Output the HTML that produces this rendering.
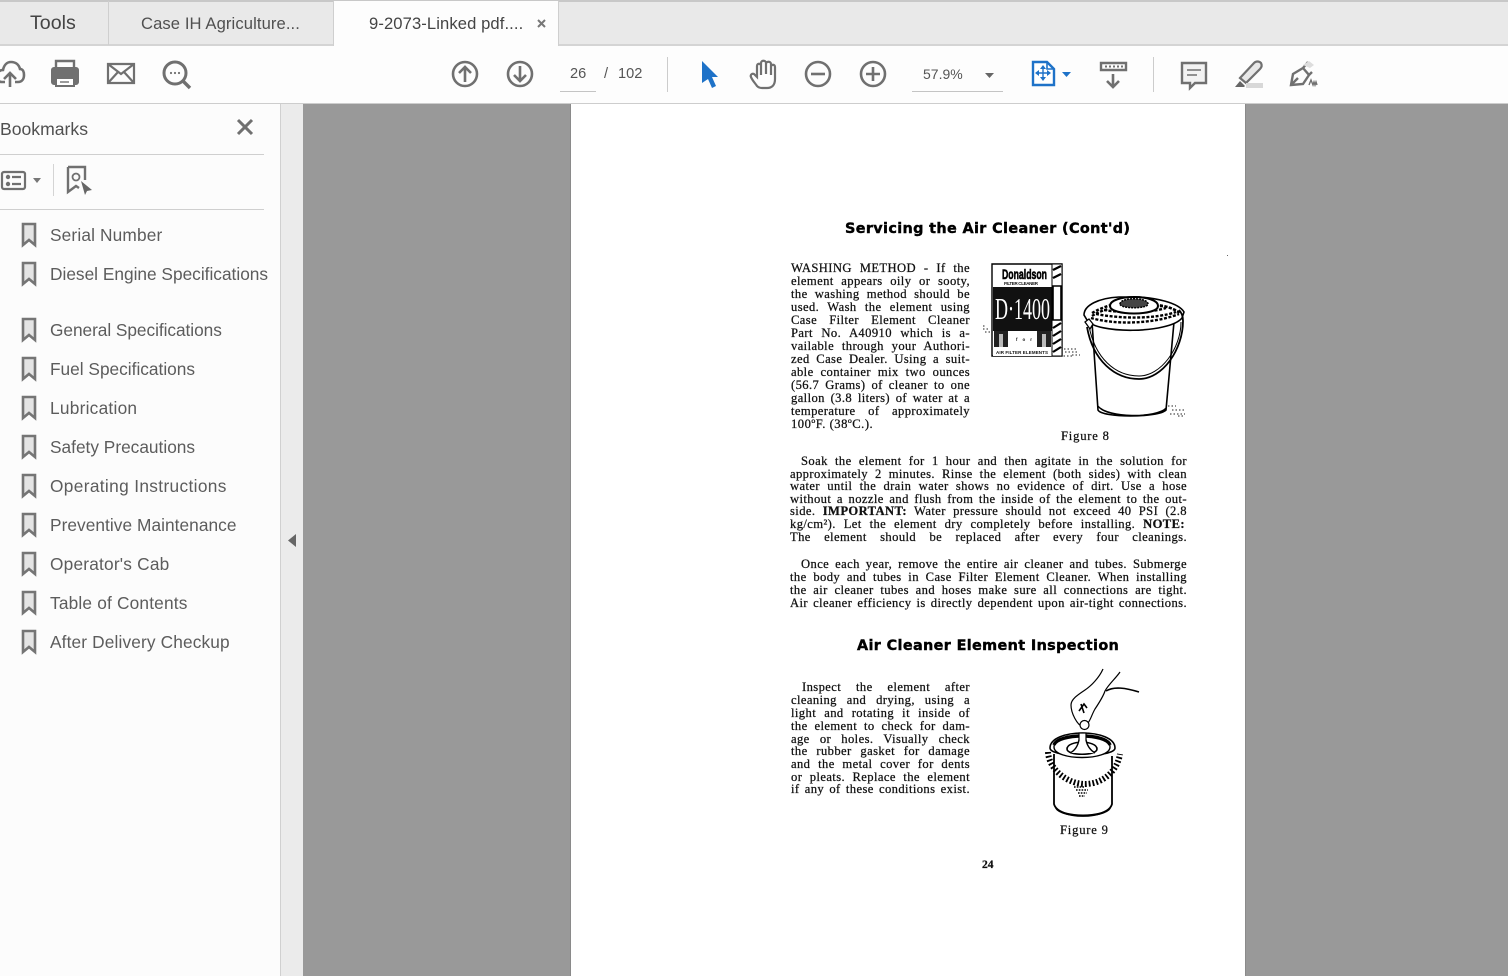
<!DOCTYPE html>
<html><head><meta charset="utf-8"><style>
html,body{margin:0;padding:0;width:1508px;height:976px;overflow:hidden;background:#999;font-family:"Liberation Sans",sans-serif}
div{position:absolute;white-space:nowrap}
.ui{color:#505050;font-size:16.6px;line-height:24px}
.bm{left:50px;color:#5c5c5c;font-size:17.3px;line-height:24px}
.j{font-family:"Liberation Serif",serif;font-size:12.6px;letter-spacing:.4px;line-height:13px;color:#111;text-align:justify;text-align-last:justify;white-space:normal;height:13px;-webkit-text-stroke:.25px #111}
.c{font-family:"Liberation Serif",serif;font-size:12.6px;line-height:13px;color:#111;-webkit-text-stroke:.25px #111}
.h{font-family:"DejaVu Sans",sans-serif;font-weight:bold;font-size:14.4px;line-height:18px;color:#000;-webkit-text-stroke:.4px #000}
svg{position:absolute;left:0;top:0}
</style></head><body>
<div style="left:0;top:0;width:1508px;height:46px;background:#e9e9e9;border-top:2px solid #c8c8c8;box-sizing:border-box;border-bottom:2px solid #d4d4d4"></div>
<div style="left:108px;top:1px;width:1px;height:44px;background:#cfcfcf"></div>
<div style="left:333px;top:1px;width:226px;height:46px;background:#fdfdfd;border-left:1px solid #cfcfcf;border-right:1px solid #cfcfcf;box-sizing:border-box"></div>
<div style="left:0;top:46px;width:1508px;height:57px;background:#fdfdfd"></div>
<div style="left:0;top:103px;width:1508px;height:1px;background:#cdcdcd"></div>
<div style="left:0;top:104px;width:280px;height:872px;background:#fcfcfc"></div>
<div style="left:280px;top:104px;width:23px;height:872px;background:#ebebeb;border-left:1px solid #d0d0d0;box-sizing:border-box"></div>
<div style="left:303px;top:104px;width:1205px;height:872px;background:#999"></div>
<div style="left:570px;top:104px;width:676px;height:872px;background:#fff;border-left:1px solid #8a8a8a;border-right:1px solid #8a8a8a;box-sizing:border-box"></div>
<div style="left:0;top:154px;width:264px;height:1px;background:#cfcfcf"></div>
<div style="left:0;top:209px;width:264px;height:1px;background:#cfcfcf"></div>
<div style="left:53px;top:164px;width:1px;height:32px;background:#d4d4d4"></div>
<div style="left:667px;top:57px;width:1px;height:35px;background:#ccc"></div>
<div style="left:1153px;top:57px;width:1px;height:35px;background:#ccc"></div>
<div style="left:560px;top:91px;width:36px;height:1px;background:#c4c4c4"></div>
<div style="left:912px;top:91px;width:91px;height:1px;background:#c4c4c4"></div>

<div class="ui" style="left:30px;top:11px;font-size:19.6px;color:#444">Tools</div>
<div class="ui" style="left:141px;top:12px;letter-spacing:.1px">Case IH Agriculture...</div>
<div class="ui" style="left:369px;top:12px;color:#444;letter-spacing:.1px">9-2073-Linked pdf....</div>
<div class="ui" style="left:570px;top:62px;font-size:14.6px;color:#555;">26</div>
<div class="ui" style="left:604px;top:62px;font-size:14.6px;color:#555;">/</div>
<div class="ui" style="left:618px;top:62px;font-size:14.6px;color:#555;">102</div>
<div class="ui" style="left:923px;top:62px;font-size:14px;color:#555;">57.9%</div>
<div class="ui" style="left:0;top:117px;font-size:17.6px">Bookmarks</div>

<div class="bm" style="top:223px;letter-spacing:.15px">Serial Number</div>
<div class="bm" style="top:262px">Diesel Engine Specifications</div>
<div class="bm" style="top:318px;letter-spacing:-.05px">General Specifications</div>
<div class="bm" style="top:357px">Fuel Specifications</div>
<div class="bm" style="top:396px;letter-spacing:.25px">Lubrication</div>
<div class="bm" style="top:435px">Safety Precautions</div>
<div class="bm" style="top:474px;letter-spacing:.35px">Operating Instructions</div>
<div class="bm" style="top:513px;letter-spacing:.05px">Preventive Maintenance</div>
<div class="bm" style="top:552px;letter-spacing:.2px">Operator's Cab</div>
<div class="bm" style="top:591px;letter-spacing:.18px">Table of Contents</div>
<div class="bm" style="top:630px;letter-spacing:.14px">After Delivery Checkup</div>

<svg width="1508" height="976" viewBox="0 0 1508 976" fill="none">
<defs><path id="bk" d="M23 224h12v21l-6-5-6 5z" fill="#e4e4e4" stroke="#757575" stroke-width="2.6" stroke-linejoin="miter"/></defs>
<use href="#bk"/><use href="#bk" y="39"/><use href="#bk" y="95"/><use href="#bk" y="134"/><use href="#bk" y="173"/><use href="#bk" y="212"/><use href="#bk" y="251"/><use href="#bk" y="290"/><use href="#bk" y="329"/><use href="#bk" y="368"/><use href="#bk" y="407"/>
<!-- tab close -->
<path d="M538 20l7 7M545 20l-7 7" stroke="#777" stroke-width="2"/>
<g stroke="#707070" stroke-width="2.6">
<!-- upload -->
<path d="M5 82H2c-4 0-5-3-5-6 0-4 3-6 6-6 1-5 4-8 8-8 5 0 8 3 9 7 3 0 4 3 4 6 0 4-2 7-6 7h-3"/>
<path d="M10 87V73M4 79l6-6 6 6"/>
<!-- mail -->
<path d="M108 64h26v19h-26zM108 64l13 10 13-10M108 83l10-11M134 83l-10-11" stroke-width="2.2"/>
<!-- search -->
<circle cx="175" cy="73" r="11" stroke-width="3"/>
<path d="M183 81l7 7" stroke-width="3.4"/>
<!-- nav -->
<circle cx="465" cy="74" r="12"/><path d="M465 82V67M459 73l6-6 6 6"/>
<circle cx="520" cy="74" r="12"/><path d="M520 66v15M514 75l6 6 6-6"/>
<circle cx="818" cy="74" r="12"/><path d="M811 74h14"/>
<circle cx="873" cy="74" r="12"/><path d="M866 74h14M873 67v14"/>
<!-- hand -->
<path d="M757 86c-2-3-5-6-6-9-1-2 1-4 3-3l3 3V66c0-3 4-3 4 0v-3c0-3 5-3 5 0v1c0-3 5-3 5 0v3c0-3 4-3 4 0v12c0 6-3 9-8 9h-5c-2 0-4-1-5-2zM761 65v10M766 64v10M771 65v10" stroke-width="2.2"/>
<!-- send -->
<path d="M1101 63h25v7h-25z" stroke-width="2.400"/>
<path d="M1113 74v13M1107 81l6 6 6-6"/>
<!-- comment -->
<path d="M1182 63h24v20h-11l-5 5v-5h-8z" fill="#f2f2f2" stroke-width="2.400"/>
<path d="M1187 70h14M1187 75h10" stroke-width="1.600"/>
<!-- highlight -->
<path d="M1240 78l14-15c2-2 5-2 7 0 1 2 1 4-1 6l-14 14z" fill="#e8e8e8" stroke-width="2.200"/>
<!-- sign -->
<path d="M1291 85l2-11 10-6 6 7-6 9zM1291 85l7-7M1303 68l5-6M1309 75l3-3" stroke-width="2.400"/>
<path d="M1309 85l2-5 2 5 1-3 1 3 1-3 1 3" stroke-width="1.400"/>
<!-- bookmark panel -->
<path d="M238 120l14 14M252 120l-14 14" stroke-width="3"/>
<rect x="2" y="172" width="23" height="17" rx="2" stroke-width="2.200"/>
<path d="M12 177h9M12 184h9" stroke-width="2.200"/>
<path d="M68 167h17v13M68 167v25l8-6 3 2" stroke-width="2.400"/>
<circle cx="76" cy="177" r="3.500" stroke-width="1.800"/>
</g>
<circle cx="8" cy="177" r="2.200" fill="#707070"/><circle cx="8" cy="184" r="2.200" fill="#707070"/>
<path d="M33 178h8l-4 5z" fill="#777"/>
<path d="M81 181l11 9-5 1-2 4z" fill="#666"/>
<!-- printer -->
<path d="M56 67v-6h18v6" stroke="#707070" stroke-width="2.400"/>
<path d="M54 67h22a3 3 0 0 1 3 3v12a3 3 0 0 1-3 3h-2v-6H56v6h-2a3 3 0 0 1-3-3V70a3 3 0 0 1 3-3z" fill="#707070"/>
<path d="M56 78h18v8H56z" stroke="#707070" stroke-width="2" fill="#fff"/><path d="M60 82h9" stroke="#707070" stroke-width="1.400"/>
<circle cx="171" cy="73" r="1.100" fill="#707070"/><circle cx="175" cy="73" r="1.100" fill="#707070"/><circle cx="179" cy="73" r="1.100" fill="#707070"/>
<!-- blue cursor -->
<path d="M702 61l16 16h-6l4 9-4 2-4-9-6 4z" fill="#1e72c8"/>
<!-- dropdown -->
<path d="M985 73h9l-4.500 5z" fill="#666"/>
<!-- fit icon -->
<path d="M1033 62h14l7 7v16h-21z" stroke="#1e72c8" stroke-width="2.400" fill="#fff"/>
<path d="M1047 62v7h7" stroke="#1e72c8" stroke-width="1.600"/>
<path d="M1043 65l3 4h-6zM1043 81l3-4h-6zM1035 73l4-3v6zM1051 73l-4-3v6z" fill="#1e72c8"/><path d="M1043 68v10M1038 73h10" stroke="#1e72c8" stroke-width="1.400"/>
<path d="M1062 72h9l-4.500 5z" fill="#1e72c8"/>
<g fill="#707070"><rect x="1105" y="65.500" width="2" height="2"/><rect x="1109" y="65.500" width="2" height="2"/><rect x="1113" y="65.500" width="2" height="2"/><rect x="1117" y="65.500" width="2" height="2"/><rect x="1121" y="65.500" width="2" height="2"/></g>
<path d="M1235 87l5-6 5 5-1 1z" fill="#666"/><path d="M1246 83h17v5h-17z" fill="#d8d8d8"/>
<path d="M1303 65l6-4 5 4-4 3z" fill="#ddd"/>
<!-- splitter arrow -->
<path d="M296 534v13l-8-6.500z" fill="#666"/>

<!-- Box -->
<g stroke="#000">
<path d="M992 264h70v92h-70z" fill="#fff" stroke-width="1.400"/>
<path d="M993 287h59v33h-59z" fill="#111" stroke="none"/>
<path d="M993 320h59v11h-59z" fill="#111" stroke="none"/>
<path d="M993 331h59v16h-59z" fill="#fff" stroke="none"/>
<path d="M994 331h14v17h-14zM1037 331h14v17h-14z" fill="#222" stroke="none"/>
<path d="M999 334h4v13h-4zM1042 334h4v13h-4z" fill="#bbb" stroke="none"/>
<path d="M993 347h59v9h-59z" fill="#fff" stroke="none"/>
<path d="M1052 264h10v92h-10z" fill="#fff" stroke-width="1"/>
<path d="M1053 270l8-4M1053 278l8-4M1053 328l8-5M1053 336l8-5M1053 344l8-5M1053 352l8-5" stroke-width="2.200"/>
<path d="M1053 286h8v34h-8z" fill="#fff" stroke-width="1.600"/>
</g>
<text x="1002" y="279" font-family="Liberation Sans" font-weight="bold" font-size="14" fill="#000" stroke="#000" stroke-width=".6" textLength="45" lengthAdjust="spacingAndGlyphs">Donaldson</text>
<text x="1004" y="285" font-family="Liberation Sans" font-weight="bold" font-size="4.500" fill="#111" textLength="34">FILTER CLEANER</text>
<text x="995" y="319" font-family="Liberation Serif" font-size="31" fill="#fff" textLength="55" lengthAdjust="spacingAndGlyphs">D·1400</text>
<text x="996" y="354" font-family="Liberation Sans" font-weight="bold" font-size="4.500" fill="#111" textLength="52">AIR FILTER ELEMENTS</text>
<text x="1016" y="341" font-family="Liberation Sans" font-weight="bold" font-size="4.500" fill="#111" textLength="16">for</text>
<!-- specks -->
<g stroke="#222" stroke-width="1" stroke-dasharray="1.500 2">
<path d="M983 329h6M985 332h5M983 326h3M1060 356h12M1065 352h12M1064 349h14M1072 355h8M1170 414h15M1172 410h12M1168 406h8M1178 416h6"/>
</g>
<!-- Bucket -->
<g stroke="#000">
<path d="M1092 322l6 88c4 8 60 8 68 0l8-88z" fill="#fff" stroke-width="1.600"/>
<path d="M1098 406c10 12 58 12 68 2-2 9-60 12-68-2z" fill="#000" stroke-width="1"/>
<path d="M1087 320c8 14 82 14 95-2l2-6c-6-10-30-14-45-15h-20c-20 1-35 8-35 18z" fill="#fff" stroke-width="1.600"/>
<g stroke-width="2.400" stroke-dasharray="3 1.600">
<path d="M1092 313c14-8 28-11 44-11M1146 304c14 0 28 4 34 9"/>
<path d="M1091 318c25 7 62 6 88-4"/>
<path d="M1096 314c25 5 60 5 80-2"/>
<path d="M1104 310c18 3 46 3 62-2"/>
<path d="M1092 316c6-4 10-5 16-7M1160 306c6 0 12 2 18 6"/>
</g>
<path d="M1110 306c0-12 48-12 48 0 0 10-48 10-48 0z" fill="#fff" stroke-width="2"/>
<path d="M1120 304c0-7 28-7 28 0 0 5-28 5-28 0z" fill="#444" stroke-width="1.500" stroke-dasharray="2 1"/>
<path d="M1087 327c6 34 28 52 52 52 24 0 44-30 44-58 0-6-2-9-4-11" stroke-width="1.800"/>
<path d="M1089 326c6 32 26 50 50 50 22 0 42-28 42-54" stroke-width="1"/>
<path d="M1085 322l5 7 3-5-4-5z" fill="#fff" stroke-width="1.300"/>
</g>
<!-- Filter / hand -->
<g stroke="#000">
<path d="M1054 754v50c4 16 54 16 58 0v-48" fill="#fff" stroke-width="1.800"/>
<path d="M1056 808c6 10 48 10 54 0" stroke-width="2"/>
<path d="M1050 748c0-20 65-20 65 0 0 10-65 10-65 0z" fill="#fff" stroke-width="1.600"/>
<path d="M1054 747c0-15 56-15 56 0 0 14-56 14-56 0z" fill="#fff" stroke-width="1.400"/>
<path d="M1054 745c4-12 52-12 56 0" stroke-width="3.400"/>
<path d="M1067 749c0-9 30-9 30 0 0 7-30 7-30 0z" fill="#fff" stroke-width="1.600"/>
<path d="M1070 753c6-3 8-8 9-13h7c1 5 4 10 9 13" fill="#fff" stroke-width="1.400"/>
<path d="M1079 741v-8h7v8" fill="#fff" stroke-width="1.200"/>
<path d="M1048 752c1 18 20 32 37 32 17 0 32-12 35-30" stroke-width="6" stroke-dasharray="1.800 2"/>
<path d="M1083 727c-6-2-12-14-12-22 0-6 8-11 14-15 6-4 14-12 18-21M1120 672c-4 6-12 13-15 19-2 6-6 12-10 18-3 5-4 10-7 14" fill="#fff" stroke-width="1.200"/>
<path d="M1080 725a4.500 4.500 0 1 0 9 0a4.500 4.500 0 1 0-9 0z" stroke-width="1.200" fill="#fff"/>
<path d="M1079 711l5-7 3 4M1081 704l3 9" stroke-width="1.600"/>
<path d="M1106 691c8-5 20-3 33 1" stroke-width="1.600"/>
<path d="M1076 790h12M1078 793h9M1074 787h10M1079 796h6" stroke-width="1.600" stroke-dasharray="1.600 1.200"/>
</g>
<rect x="1227" y="255" width="1" height="1" fill="#666"/>
</svg>

<div class="h" style="left:845px;top:220px;letter-spacing:.36px">Servicing the Air Cleaner (Cont'd)</div>
<div class="h" style="left:857px;top:637px;letter-spacing:.36px">Air Cleaner Element Inspection</div>

<div class="j" style="left:791px;top:262px;width:179px">WASHING METHOD - If the</div>
<div class="j" style="left:791px;top:275px;width:179px">element appears oily or sooty,</div>
<div class="j" style="left:791px;top:288px;width:179px">the washing method should be</div>
<div class="j" style="left:791px;top:301px;width:179px">used. Wash the element using</div>
<div class="j" style="left:791px;top:314px;width:179px">Case Filter Element Cleaner</div>
<div class="j" style="left:791px;top:327px;width:179px">Part No. A40910 which is a-</div>
<div class="j" style="left:791px;top:340px;width:179px">vailable through your Authori-</div>
<div class="j" style="left:791px;top:353px;width:179px">zed Case Dealer. Using a suit-</div>
<div class="j" style="left:791px;top:366px;width:179px">able container mix two ounces</div>
<div class="j" style="left:791px;top:379px;width:179px">(56.7 Grams) of cleaner to one</div>
<div class="j" style="left:791px;top:392px;width:179px">gallon (3.8 liters) of water at a</div>
<div class="j" style="left:791px;top:405px;width:179px">temperature of approximately</div>
<div class="c" style="left:791px;top:418px;letter-spacing:.5px">100ºF. (38ºC.).</div>
<div class="c" style="left:1061px;top:430px;letter-spacing:.8px">Figure 8</div>

<div class="j" style="left:801px;top:455px;width:386px">Soak the element for 1 hour and then agitate in the solution for</div>
<div class="j" style="left:790px;top:468px;width:397px">approximately 2 minutes. Rinse the element (both sides) with clean</div>
<div class="j" style="left:790px;top:480px;width:397px">water until the drain water shows no evidence of dirt. Use a hose</div>
<div class="j" style="left:790px;top:493px;width:397px">without a nozzle and flush from the inside of the element to the out-</div>
<div class="j" style="left:790px;top:505px;width:397px">side. <b>IMPORTANT:</b> Water pressure should not exceed 40 PSI (2.8</div>
<div class="j" style="left:790px;top:518px;width:395px">kg/cm²). Let the element dry completely before installing. <b>NOTE:</b></div>
<div class="j" style="left:790px;top:531px;width:397px">The element should be replaced after every four cleanings.</div>

<div class="j" style="left:801px;top:558px;width:386px">Once each year, remove the entire air cleaner and tubes. Submerge</div>
<div class="j" style="left:790px;top:571px;width:397px">the body and tubes in Case Filter Element Cleaner. When installing</div>
<div class="j" style="left:790px;top:584px;width:397px">the air cleaner tubes and hoses make sure all connections are tight.</div>
<div class="j" style="left:790px;top:597px;width:397px">Air cleaner efficiency is directly dependent upon air-tight connections.</div>

<div class="j" style="left:802px;top:681px;width:168px">Inspect the element after</div>
<div class="j" style="left:791px;top:694px;width:179px">cleaning and drying, using a</div>
<div class="j" style="left:791px;top:707px;width:179px">light and rotating it inside of</div>
<div class="j" style="left:791px;top:720px;width:179px">the element to check for dam-</div>
<div class="j" style="left:791px;top:733px;width:179px">age or holes. Visually check</div>
<div class="j" style="left:791px;top:745px;width:179px">the rubber gasket for damage</div>
<div class="j" style="left:791px;top:758px;width:179px">and the metal cover for dents</div>
<div class="j" style="left:791px;top:771px;width:179px">or pleats. Replace the element</div>
<div class="j" style="left:791px;top:783px;width:179px">if any of these conditions exist.</div>
<div class="c" style="left:1060px;top:824px;letter-spacing:.8px">Figure 9</div>
<div class="c" style="left:982px;top:859px;font-weight:bold;font-size:11.500px">24</div>
</body></html>
